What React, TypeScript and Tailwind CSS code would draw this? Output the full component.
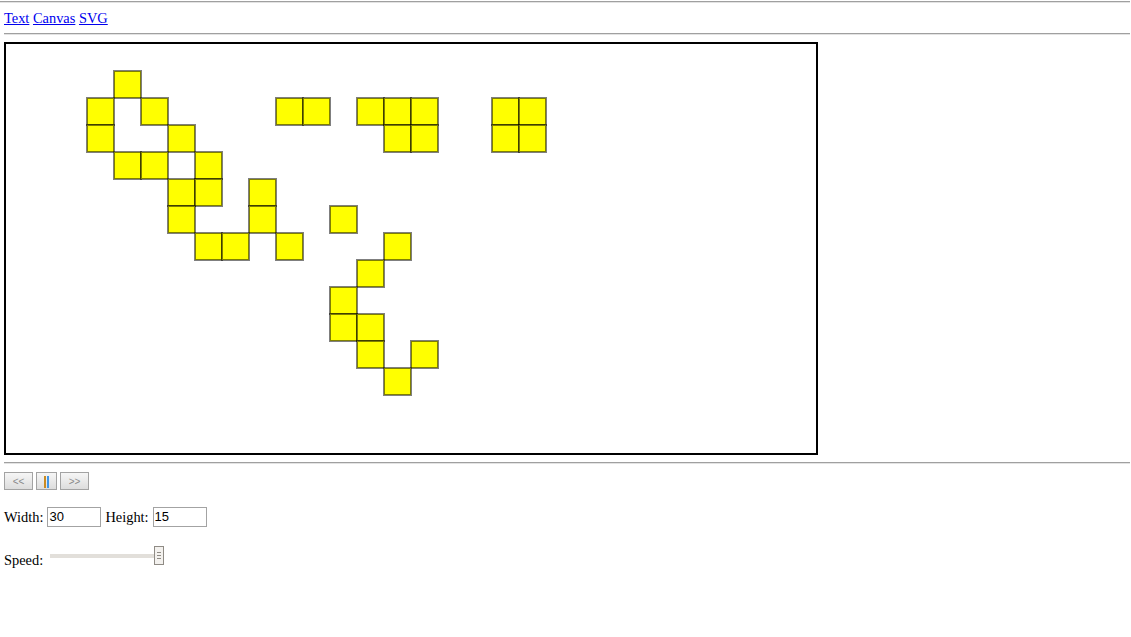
import React from "react";

const cells: [number, number][] = [
  [4, 1],
  [3, 2], [5, 2], [10, 2], [11, 2], [13, 2], [14, 2], [15, 2], [18, 2], [19, 2],
  [3, 3], [6, 3], [14, 3], [15, 3], [18, 3], [19, 3],
  [4, 4], [5, 4], [7, 4],
  [6, 5], [7, 5], [9, 5],
  [6, 6], [9, 6], [12, 6],
  [7, 7], [8, 7], [10, 7], [14, 7],
  [13, 8],
  [12, 9],
  [12, 10], [13, 10],
  [13, 11], [15, 11],
  [14, 12],
];

function Hr({ full = false }: { full?: boolean }) {
  return (
    <div
      className={
        "h-[2px] border-t border-t-[#a0a0a0] border-b border-b-[#e3e3e3] " +
        (full ? "-ml-1 mr-[1px]" : "mr-[1px]")
      }
    />
  );
}

function Btn({ children, w }: { children: React.ReactNode; w: string }) {
  return (
    <div
      className={
        "h-[18px] flex items-center justify-center border border-[#a3a3a3] bg-gradient-to-b from-[#f6f6f6] to-[#dddddd] font-['Liberation_Sans'] text-[10px] text-[#8a8a8a] " +
        w
      }
    >
      {children}
    </div>
  );
}

export default function App() {
  return (
    <div className="bg-white w-[1131px] h-[637px] overflow-hidden pl-1 font-['Liberation_Serif',serif] text-[14.4px] text-black">
      <div className="pt-[1px]">
        <Hr full />
      </div>
      <div className="h-[30px] leading-[30px]">
        <a className="text-[#0000ee] underline" href="#">Text</a>{" "}
        <a className="text-[#0000ee] underline" href="#">Canvas</a>{" "}
        <a className="text-[#0000ee] underline" href="#">SVG</a>
      </div>
      <Hr />
      <div className="mt-[7px] w-[814px] h-[413px] border-2 border-black">
        <svg width="810" height="405" viewBox="0 0 810 405" className="block">
          {cells.map(([c, r], i) => (
            <rect
              key={i}
              x={27 * c}
              y={27 * r}
              width={27}
              height={27}
              fill="#ffff00"
              stroke="rgba(0,0,0,0.5)"
              strokeWidth={2}
            />
          ))}
        </svg>
      </div>
      <div className="mt-[7px]">
        <Hr />
      </div>
      <div className="mt-[8px] flex gap-[3px] h-[18px]">
        <Btn w="w-[29px]">&lt;&lt;</Btn>
        <Btn w="w-[21px]">
          <div className="flex gap-[1px] h-[12px] mt-[2px]">
            <div className="w-[2px] h-full bg-[#c98a22]" />
            <div className="w-[2px] h-full bg-[#3f95e6]" />
          </div>
        </Btn>
        <Btn w="w-[29px]">&gt;&gt;</Btn>
      </div>
      <div className="mt-[17px] flex items-start h-[20px]">
        <span className="leading-[18px] mt-[1px]">Width:</span>
        <div className="ml-[4px] w-[54px] h-[20px] border border-[#a3a3a3] font-['Liberation_Sans'] text-[13px] leading-[18px] pl-[1px]">
          30
        </div>
        <span className="ml-[4px] leading-[18px] mt-[1px]">Height:</span>
        <div className="ml-[4px] w-[54px] h-[20px] border border-[#a3a3a3] font-['Liberation_Sans'] text-[13px] leading-[18px] pl-[1px]">
          15
        </div>
      </div>
      <div className="mt-[19px] flex items-start h-[24px]">
        <span className="leading-[18px] mt-[5px]">Speed:</span>
        <div className="relative ml-[7px] w-[116px] h-[19px]">
          <div className="absolute left-0 top-[8px] w-[107px] h-[4px] bg-[#e2dfda]" />
          <div className="absolute left-[104px] top-0 w-[10px] h-[19px] border border-[#8f8b85] bg-[#f3f1ee] flex flex-col items-center justify-center gap-[2px]">
            <div className="w-[4px] h-[1px] bg-[#8f8b85]" />
            <div className="w-[4px] h-[1px] bg-[#8f8b85]" />
            <div className="w-[4px] h-[1px] bg-[#8f8b85]" />
          </div>
        </div>
      </div>
    </div>
  );
}
